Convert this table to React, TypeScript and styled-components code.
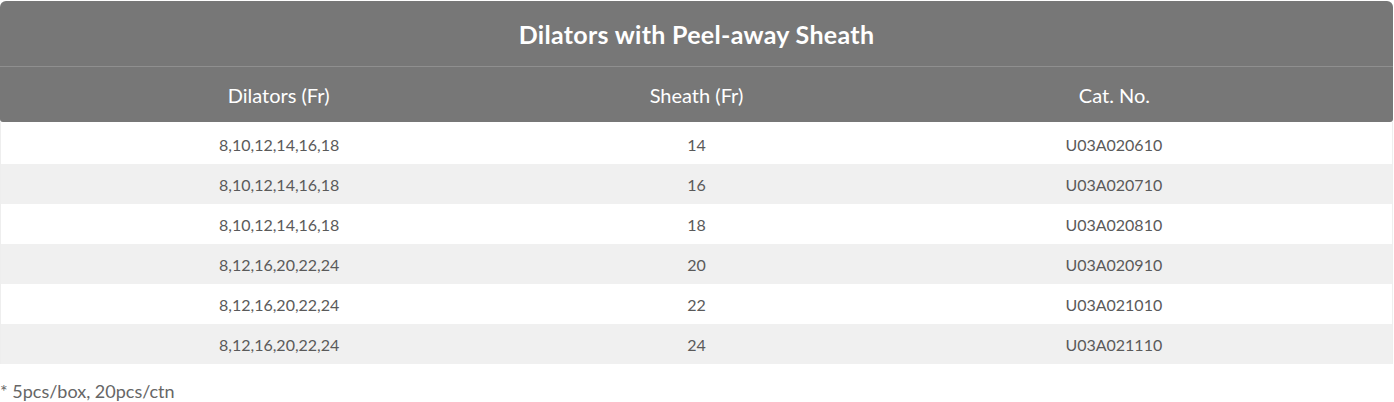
import * as React from 'react'
import styled, { createGlobalStyle } from 'styled-components'

interface IRow {
  dilators: string
  sheath: string
  catNo: string
}

const rows: IRow[] = [
  { dilators: '8,10,12,14,16,18', sheath: '14', catNo: 'U03A020610' },
  { dilators: '8,10,12,14,16,18', sheath: '16', catNo: 'U03A020710' },
  { dilators: '8,10,12,14,16,18', sheath: '18', catNo: 'U03A020810' },
  { dilators: '8,12,16,20,22,24', sheath: '20', catNo: 'U03A020910' },
  { dilators: '8,12,16,20,22,24', sheath: '22', catNo: 'U03A021010' },
  { dilators: '8,12,16,20,22,24', sheath: '24', catNo: 'U03A021110' }
]

const App: React.FC = () => {
  return (
    <React.Fragment>
      <GlobalStyle />
      <Wrapper>
        <Table>
          <Head>
            <Title>Dilators with Peel-away Sheath</Title>
            <ColumnRow>
              <Cell>Dilators (Fr)</Cell>
              <Cell>Sheath (Fr)</Cell>
              <Cell>Cat. No.</Cell>
            </ColumnRow>
          </Head>
          <Body>
            {rows.map((row, i) => (
              <DataRow key={row.catNo} $striped={i % 2 === 1}>
                <Cell>{row.dilators}</Cell>
                <Cell>{row.sheath}</Cell>
                <Cell>{row.catNo}</Cell>
              </DataRow>
            ))}
          </Body>
        </Table>
        <Note>* 5pcs/box, 20pcs/ctn</Note>
      </Wrapper>
    </React.Fragment>
  )
}

const GlobalStyle = createGlobalStyle`
  body {
    margin: 0;
    background: #fff;
    font-family: 'Lato', 'Open Sans', sans-serif;
  }
`

const Wrapper = styled.div`
  width: 1394px;
  padding-top: 1px;
`

const Table = styled.div`
  width: 1393px;
`

const Head = styled.div`
  background: #777777;
  color: #ffffff;
  border-radius: 6px 6px 3px 3px;
`

const Title = styled.div`
  height: 65px;
  display: flex;
  align-items: center;
  justify-content: center;
  font-size: 25px;
  font-weight: 700;
  letter-spacing: 0.3px;
  border-bottom: 1px solid #8f8f8f;
`

const ColumnRow = styled.div`
  height: 55px;
  display: grid;
  grid-template-columns: 2fr 1fr 2fr;
  align-items: center;
  font-size: 20px;
`

const Cell = styled.div`
  text-align: center;
`

const Body = styled.div`
  border-left: 1px solid #eeeeee;
  border-right: 1px solid #eeeeee;
  padding-top: 2px;
`

const DataRow = styled.div<{ $striped: boolean }>`
  height: 40px;
  display: grid;
  grid-template-columns: 2fr 1fr 2fr;
  align-items: center;
  font-size: 16px;
  color: #5a5a5a;
  background: ${p => (p.$striped ? '#f0f0f0' : '#ffffff')};
`

const Note = styled.div`
  margin-top: 16px;
  font-size: 18px;
  color: #666666;
`

export default App
